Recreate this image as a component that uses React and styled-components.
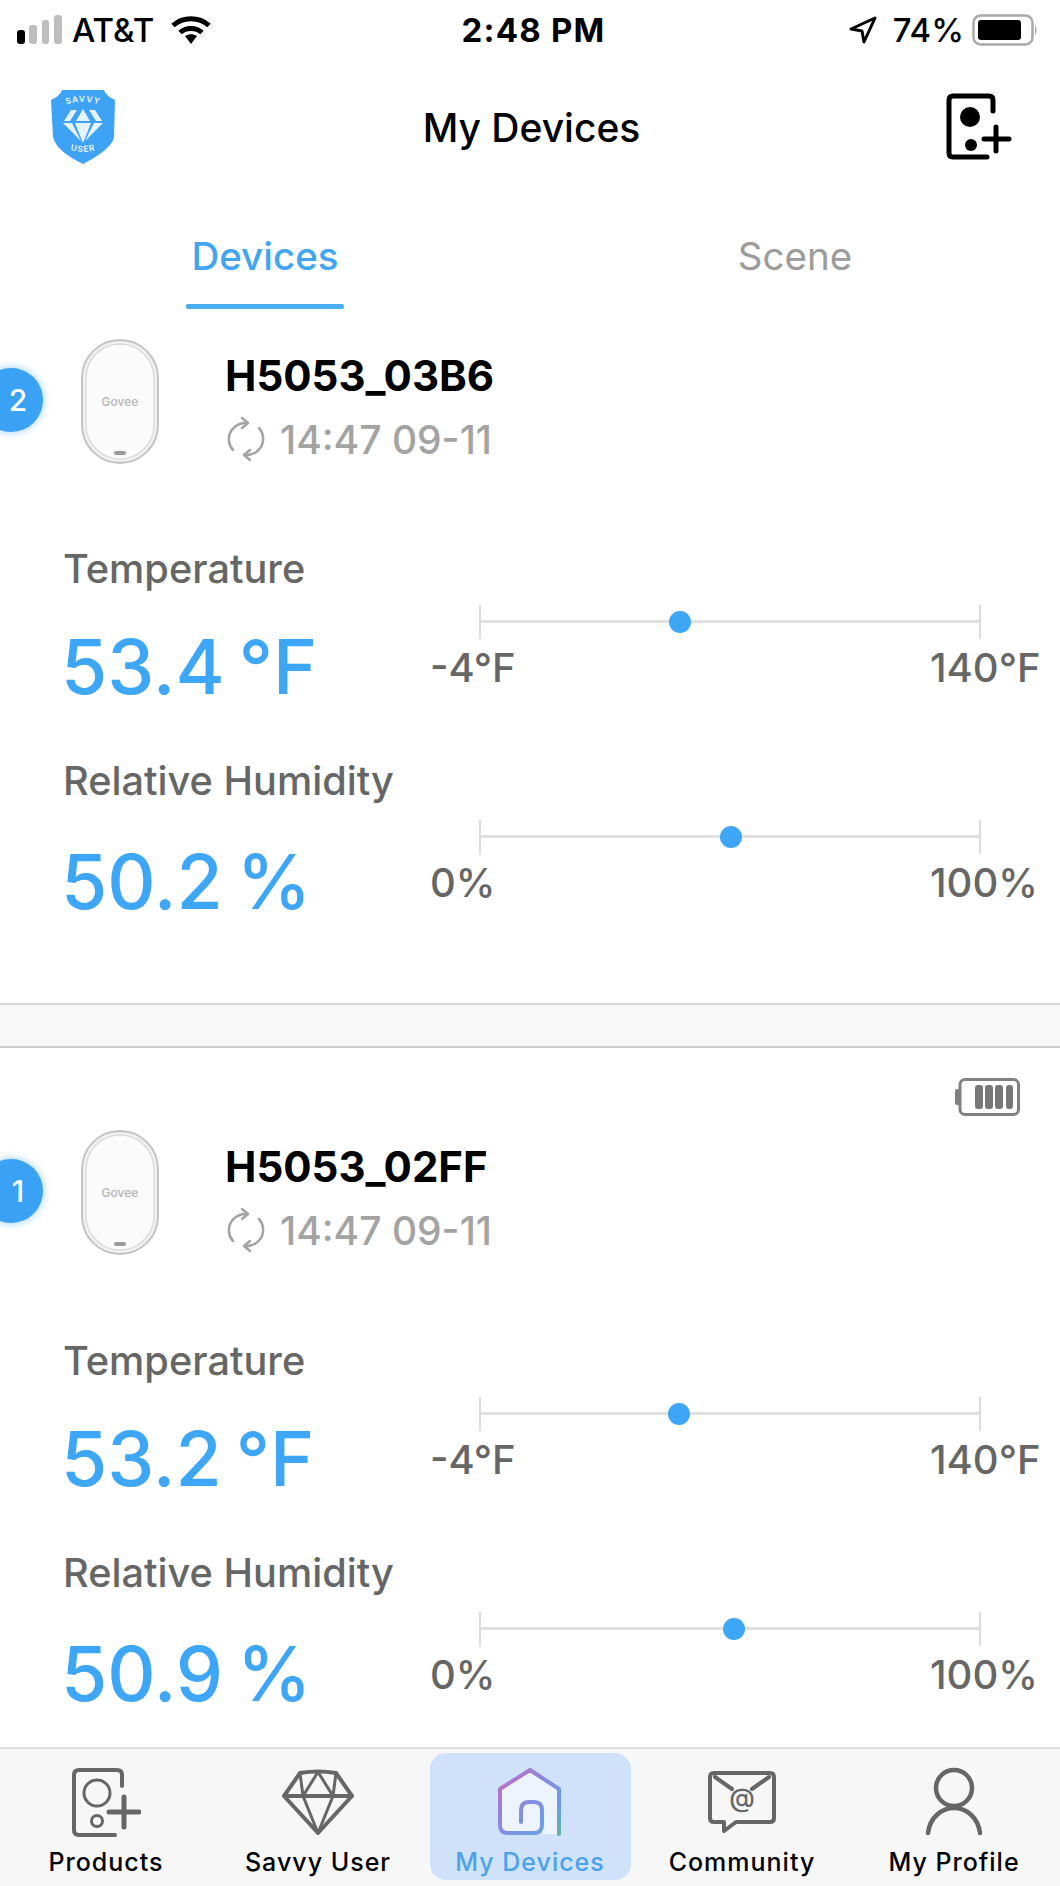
import React from 'react';
import styled, { createGlobalStyle } from 'styled-components';

const GlobalStyle = createGlobalStyle`
  html, body {
    margin: 0;
    padding: 0;
    background: #fff;
    font-family: Inter, "Noto Sans", "Liberation Sans", sans-serif;
  }
  * { box-sizing: border-box; }
`;

const BLUE = '#3ea6f6';

const Page = styled.div`
  width: 1060px;
  height: 1886px;
  display: flex;
  flex-direction: column;
  overflow: hidden;
  background: #fff;
`;

/* status bar */
const StatusBar = styled.div`
  height: 60px;
  flex: none;
  display: grid;
  grid-template-columns: 1fr auto 1fr;
  align-items: center;
  padding: 0 22px 0 17px;
  font-size: 33px;
  font-weight: 500;
  color: #000;
`;
const StatusLeft = styled.div`
  display: flex;
  align-items: center;
  gap: 9px;
`;
const Carrier = styled.span`
  margin-right: 8px;
`;
const StatusTime = styled.span`
  margin-left: 12px;
  font-weight: 700;
  font-size: 33px;
  letter-spacing: 1.2px;
`;
const StatusRight = styled.div`
  display: flex;
  align-items: center;
  justify-content: flex-end;
  gap: 8px;
`;
const Percent = styled.span`
  margin-left: 8px;
`;

/* header */
const Header = styled.header`
  height: 134px;
  flex: none;
  display: grid;
  grid-template-columns: 1fr auto 1fr;
  align-items: center;
  padding: 0 47px 0 50px;
`;
const Title = styled.h1`
  margin: 0;
  font-size: 39px;
  font-weight: 500;
  color: #000;
`;
const HeaderAction = styled.div`
  display: flex;
  justify-content: flex-end;
`;

/* devices / scene tabs */
const Tabs = styled.div`
  height: 115px;
  flex: none;
  display: grid;
  grid-template-columns: 1fr 1fr;
  padding-top: 40px;
`;
const TabButton = styled.div`
  display: flex;
  flex-direction: column;
  align-items: center;
  font-size: 38.5px;
  line-height: 44px;
  font-weight: ${p => (p.$active ? 500 : 400)};
  color: ${p => (p.$active ? '#42a5ef' : '#9b9b9b')};
  &::after {
    content: '';
    margin-top: 26px;
    width: 158px;
    height: 5px;
    border-radius: 2px;
    background: ${p => (p.$active ? '#4badf2' : 'transparent')};
  }
`;

/* device list */
const List = styled.div`
  flex: 1;
  min-height: 0;
  overflow: hidden;
`;
const Card = styled.section`
  padding-top: 30px;
  height: ${p => (p.$open ? 'auto' : '694px')};
`;
const Separator = styled.div`
  height: 45px;
  background: #f8f8f8;
  border-top: 2px solid #d6d6d6;
  border-bottom: 2px solid #cfcfcf;
`;
const BatteryRow = styled.div`
  display: flex;
  justify-content: flex-end;
  height: 38px;
  margin-bottom: 14px;
  padding-right: 40px;
`;
const DeviceRow = styled.div`
  position: relative;
  display: flex;
  align-items: flex-start;
  gap: 66px;
  height: 125px;
  padding-left: 81px;
  margin-bottom: ${p => (p.$open ? '84px' : '83px')};
`;
const Badge = styled.div`
  position: absolute;
  left: -21px;
  top: 29px;
  width: 64px;
  height: 64px;
  padding-left: 14px;
  border-radius: 50%;
  background: #3aa2f5;
  box-shadow: 0 0 8px rgba(58, 162, 245, 0.55);
  color: #fff;
  display: flex;
  align-items: center;
  justify-content: center;
  font-size: 30px;
  font-weight: 500;
`;
const DeviceInfo = styled.div`
  display: flex;
  flex-direction: column;
`;
const DeviceName = styled.div`
  font-size: 42px;
  line-height: 46px;
  margin-top: 14px;
  font-weight: 700;
  color: #000;
`;
const SyncRow = styled.div`
  display: flex;
  align-items: center;
  gap: 15px;
  margin-top: 17px;
  height: 46px;
  padding-left: 2px;
  font-size: 39px;
  font-weight: 500;
  color: #a3a3a3;
`;
const Metrics = styled.div`
  display: flex;
  flex-direction: column;
  gap: 47px;
`;
const Metric = styled.div`
  display: grid;
  grid-template-columns: 367px 1fr;
  padding-left: 63px;
`;
const MetricLabel = styled.div`
  font-size: 39.7px;
  line-height: 44px;
  font-weight: 500;
  color: #666;
  margin-bottom: ${p => (p.$loose ? '34px' : '31px')};
  white-space: nowrap;
`;
const MetricValue = styled.div`
  margin-left: -2px;
  font-size: 75px;
  line-height: 90px;
  font-weight: 500;
  word-spacing: -6px;
  color: ${BLUE};
  white-space: nowrap;
`;
const Scale = styled.div`
  padding-top: ${p => (p.$loose ? '61px' : '58px')};
`;
const Track = styled.div`
  position: relative;
  height: 34px;
  margin: 0 79px 7px 49px;
  border-left: 2px solid #dcdcdc;
  border-right: 2px solid #dcdcdc;
  &::before {
    content: '';
    position: absolute;
    left: 0;
    right: 0;
    top: 15px;
    height: 3px;
    background: #e0e0e0;
  }
`;
const Marker = styled.span`
  position: absolute;
  top: 6px;
  width: 22px;
  height: 22px;
  margin-left: -11px;
  border-radius: 50%;
  background: ${BLUE};
`;
const ScaleEnds = styled.div`
  display: grid;
  grid-template-columns: 1fr 112px;
  padding-right: 18px;
  font-size: 40px;
  line-height: 44px;
  font-weight: 500;
  color: #666;
  white-space: nowrap;
`;

/* bottom navigation */
const BottomNav = styled.nav`
  height: 139px;
  flex: none;
  display: grid;
  grid-template-columns: repeat(5, 1fr);
  border-top: 2px solid #dddddd;
  background: #f7f7f7;
`;
const NavItem = styled.div`
  margin: 4px 5.5px 6px;
  padding-top: 14px;
  border-radius: 16px;
  background: ${p => (p.$active ? '#cfe2f9' : 'transparent')};
  color: ${p => (p.$active ? '#4aa3e8' : '#000')};
  display: flex;
  flex-direction: column;
  align-items: center;
`;
const NavIcon = styled.div`
  height: 70px;
  display: flex;
  align-items: center;
  justify-content: center;
`;
const NavLabel = styled.div`
  margin-top: 8px;
  font-size: 25px;
  line-height: 34px;
  font-weight: 500;
  letter-spacing: 1px;
  white-space: nowrap;
`;

/* drawings */
const SignalIcon = () => (
  <svg width="46" height="30" viewBox="0 0 46 30">
    <rect x="0" y="15" width="8" height="14" rx="3" fill="#000" />
    <rect x="12" y="10" width="8" height="19" rx="3" fill="#bdbdbd" />
    <rect x="25" y="5" width="7" height="24" rx="3" fill="#bdbdbd" />
    <rect x="37" y="0" width="8" height="29" rx="3" fill="#bdbdbd" />
  </svg>
);

const WifiIcon = () => (
  <svg width="40" height="30" viewBox="0 0 40 30" fill="none" stroke="#000" strokeWidth="5">
    <path d="M2 10.5 C12 1.5 28 1.5 38 10.5" />
    <path d="M9 17.5 C15 12 25 12 31 17.5" />
    <path d="M14 21 L20 29 L26 21 C22 18.5 18 18.5 14 21 Z" fill="#000" stroke="none" />
  </svg>
);

const LocationIcon = () => (
  <svg width="28" height="28" viewBox="0 0 28 28" fill="none" stroke="#000" strokeWidth="3" strokeLinejoin="round">
    <path d="M2 13 L26 2 L15 26 L13 15 Z" />
  </svg>
);

const PhoneBattery = () => (
  <svg width="66" height="32" viewBox="0 0 66 32">
    <rect x="1.5" y="1.5" width="59" height="29" rx="7" fill="none" stroke="#a8a8a8" strokeWidth="2.5" />
    <rect x="6" y="6" width="43" height="20" rx="3" fill="#000" />
    <path d="M63 11 Q66 16 63 21 Z" fill="#a8a8a8" />
  </svg>
);

const ShieldLogo = () => (
  <svg width="66" height="76" viewBox="0 0 66 76">
    <path d="M12 1 H54 Q56 7 65 11 L64 48 Q62 60 33 75 Q6 62 3 48 L1 11 Q10 7 12 1 Z" fill="#3ea2f5" />
    <defs>
      <path id="savvyArc" d="M12 17 Q33 9 54 17" />
      <path id="userArc" d="M12 58 Q33 68 54 58" />
    </defs>
    <text fontSize="8.5" fontWeight="700" fill="#d9eefe" letterSpacing="0.8">
      <textPath href="#savvyArc" startOffset="50%" textAnchor="middle">SAVVY</textPath>
    </text>
    <text fontSize="8.5" fontWeight="700" fill="#d9eefe" letterSpacing="0.8">
      <textPath href="#userArc" startOffset="50%" textAnchor="middle">USER</textPath>
    </text>
    <g fill="#e4f3ff">
      <path d="M21 21 H27 L20 32 H14 Z" />
      <path d="M33 20 L40 32 H26 Z" />
      <path d="M39 21 H45 L52 32 H46 Z" />
      <path d="M13 34 H22 L31 52 Z" />
      <path d="M25 34 H41 L33 54 Z" />
      <path d="M44 34 H53 L35 52 Z" />
    </g>
  </svg>
);

const AddDeviceIcon = () => (
  <svg width="68" height="68" viewBox="0 0 68 68" fill="none" stroke="#000" strokeWidth="5" strokeLinecap="round">
    <path d="M48 18 V7 Q48 3 44 3 H8 Q4 3 4 7 V60 Q4 64 8 64 H42" />
    <circle cx="25" cy="24" r="10" fill="#000" stroke="none" />
    <circle cx="26" cy="52" r="6" fill="#000" stroke="none" />
    <path d="M39 46 H64 M51 34 V58" />
  </svg>
);

const DeviceImage = () => (
  <svg width="78" height="125" viewBox="0 0 78 125">
    <rect x="1" y="1" width="76" height="123" rx="38" fill="#f1f1f1" stroke="#c4c4c4" strokeWidth="2" />
    <rect x="5" y="5" width="68" height="115" rx="34" fill="#fbfbfb" stroke="#dcdcdc" strokeWidth="1.5" />
    <text x="39" y="67" textAnchor="middle" fontSize="12" fontWeight="500" fill="#b5b5b5">Govee</text>
    <rect x="33" y="112" width="12" height="4" rx="2" fill="#9a9a9a" />
  </svg>
);

const SyncIcon = () => (
  <svg width="38" height="46" viewBox="0 0 38 46" fill="none" stroke="#a3a3a3" strokeWidth="2.5" strokeLinecap="round" strokeLinejoin="round">
    <path d="M21 7 C9 6 1 15 2 25 C2.5 29 4 32 6 34" />
    <path d="M15 2 L21 7 L15 12" />
    <path d="M17 39 C29 40 37 31 36 21 C35.5 17 34 14 32 12" />
    <path d="M23 34 L17 39 L23 44" />
  </svg>
);

const CellBattery = () => (
  <svg width="66" height="38" viewBox="0 0 66 38">
    <rect x="6" y="1.5" width="58.5" height="35" rx="5" fill="#fff" stroke="#808080" strokeWidth="3" />
    <path d="M6 11 H3 Q1 11 1 13 V25 Q1 27 3 27 H6 Z" fill="#808080" />
    <rect x="21" y="7" width="8" height="24" rx="3" fill="#777" />
    <rect x="31" y="7" width="8" height="24" rx="3" fill="#777" />
    <rect x="41" y="7" width="8" height="24" rx="3" fill="#777" />
    <rect x="52" y="7" width="7" height="24" rx="3" fill="#777" />
  </svg>
);

const ProductsIcon = () => (
  <svg width="70" height="70" viewBox="0 0 70 70" fill="none" stroke="#666" strokeWidth="4" strokeLinecap="round">
    <path d="M51 19 V8 Q51 3 46 3 H8 Q3 3 3 8 V63 Q3 68 8 68 H44" />
    <circle cx="26" cy="26" r="13" strokeWidth="3" />
    <circle cx="26" cy="54" r="5.5" strokeWidth="3" />
    <path d="M38 45 H68 M53 30 V60" strokeWidth="5" />
  </svg>
);

const DiamondIcon = () => (
  <svg width="72" height="66" viewBox="0 0 72 66" fill="none" stroke="#666" strokeWidth="4" strokeLinejoin="round">
    <path d="M18 4 Q36 1 54 4 L70 27 L36 64 L2 27 Z" />
    <path d="M2 27 H70" />
    <path d="M18 4 L21 27 L36 3 L51 27 L54 4" strokeWidth="3" />
    <path d="M21 27 L36 64 L51 27" strokeWidth="3" />
  </svg>
);

const HomeIcon = () => (
  <svg width="64" height="68" viewBox="0 0 64 68" fill="none">
    <defs>
      <linearGradient id="homeStroke" x1="0" y1="0" x2="1" y2="1">
        <stop offset="0" stopColor="#cc6bb8" />
        <stop offset="0.4" stopColor="#8d85df" />
        <stop offset="0.8" stopColor="#6c9fe8" />
        <stop offset="1" stopColor="#62b3a2" />
      </linearGradient>
    </defs>
    <path d="M2 21 L32 2 L61 21 V66 H10 Q2 65 2 58 Z" fill="#eef4fd" />
    <path
      d="M23 54 V43 Q23 34 31 34 H36 Q44 34 44 42 V57 Q44 65 36 65 H10 Q2 65 2 57 V21 L32 2 L61 21 V66"
      stroke="url(#homeStroke)"
      strokeWidth="4"
      strokeLinecap="round"
      strokeLinejoin="round"
    />
  </svg>
);

const CommunityIcon = () => (
  <svg width="68" height="64" viewBox="0 0 68 64" fill="none" stroke="#666" strokeWidth="4" strokeLinejoin="round" strokeLinecap="round">
    <path d="M6 3 H62 Q66 3 66 7 V48 Q66 52 62 52 H28 L16 61 V52 H6 Q2 52 2 48 V7 Q2 3 6 3 Z" />
    <path d="M7 7 L24 19 M61 7 L44 19" />
    <text x="34" y="37" textAnchor="middle" fontSize="26" fontWeight="500" fill="#666" stroke="none">@</text>
  </svg>
);

const ProfileIcon = () => (
  <svg width="60" height="70" viewBox="0 0 60 70" fill="none" stroke="#666" strokeWidth="4.5" strokeLinecap="round">
    <circle cx="30" cy="21" r="18" />
    <path d="M4 66 C6 50 18 41 30 41 C42 41 54 50 56 66" />
  </svg>
);

function percent(value, min, max) {
  return ((value - min) / (max - min)) * 100;
}

function Reading({ label, value, unit, min, max, low, high, loose }) {
  return (
    <Metric>
      <div>
        <MetricLabel $loose={loose}>{label}</MetricLabel>
        <MetricValue>{value} {unit}</MetricValue>
      </div>
      <Scale $loose={loose}>
        <Track>
          <Marker style={{ left: `${percent(value, min, max)}%` }} />
        </Track>
        <ScaleEnds>
          <span>{low}</span>
          <span>{high}</span>
        </ScaleEnds>
      </Scale>
    </Metric>
  );
}

function DeviceCard({ index, name, temperature, humidity, battery }) {
  return (
    <Card $open={battery}>
      {battery && (
        <BatteryRow>
          <CellBattery />
        </BatteryRow>
      )}
      <DeviceRow $open={battery}>
        <Badge>{index}</Badge>
        <DeviceImage />
        <DeviceInfo>
          <DeviceName>{name}</DeviceName>
          <SyncRow>
            <SyncIcon />
            14:47 09-11
          </SyncRow>
        </DeviceInfo>
      </DeviceRow>
      <Metrics>
        <Reading label="Temperature" value={temperature} unit="°F" min={-4} max={140} low="-4°F" high="140°F" />
        <Reading label="Relative Humidity" value={humidity} unit="%" min={0} max={100} low="0%" high="100%" loose />
      </Metrics>
    </Card>
  );
}

const navItems = [
  { label: 'Products', icon: <ProductsIcon /> },
  { label: 'Savvy User', icon: <DiamondIcon /> },
  { label: 'My Devices', icon: <HomeIcon />, active: true },
  { label: 'Community', icon: <CommunityIcon /> },
  { label: 'My Profile', icon: <ProfileIcon /> },
];

export default function App() {
  return (
    <>
      <GlobalStyle />
      <Page>
        <StatusBar>
          <StatusLeft>
            <SignalIcon />
            <Carrier>AT&amp;T</Carrier>
            <WifiIcon />
          </StatusLeft>
          <StatusTime>2:48 PM</StatusTime>
          <StatusRight>
            <LocationIcon />
            <Percent>74%</Percent>
            <PhoneBattery />
          </StatusRight>
        </StatusBar>
        <Header>
          <ShieldLogo />
          <Title>My Devices</Title>
          <HeaderAction>
            <AddDeviceIcon />
          </HeaderAction>
        </Header>
        <Tabs>
          <TabButton $active>Devices</TabButton>
          <TabButton>Scene</TabButton>
        </Tabs>
        <List>
          <DeviceCard index={2} name="H5053_03B6" temperature={53.4} humidity={50.2} />
          <Separator />
          <DeviceCard index={1} name="H5053_02FF" temperature={53.2} humidity={50.9} battery />
        </List>
        <BottomNav>
          {navItems.map(item => (
            <NavItem key={item.label} $active={item.active}>
              <NavIcon>{item.icon}</NavIcon>
              <NavLabel>{item.label}</NavLabel>
            </NavItem>
          ))}
        </BottomNav>
      </Page>
    </>
  );
}
